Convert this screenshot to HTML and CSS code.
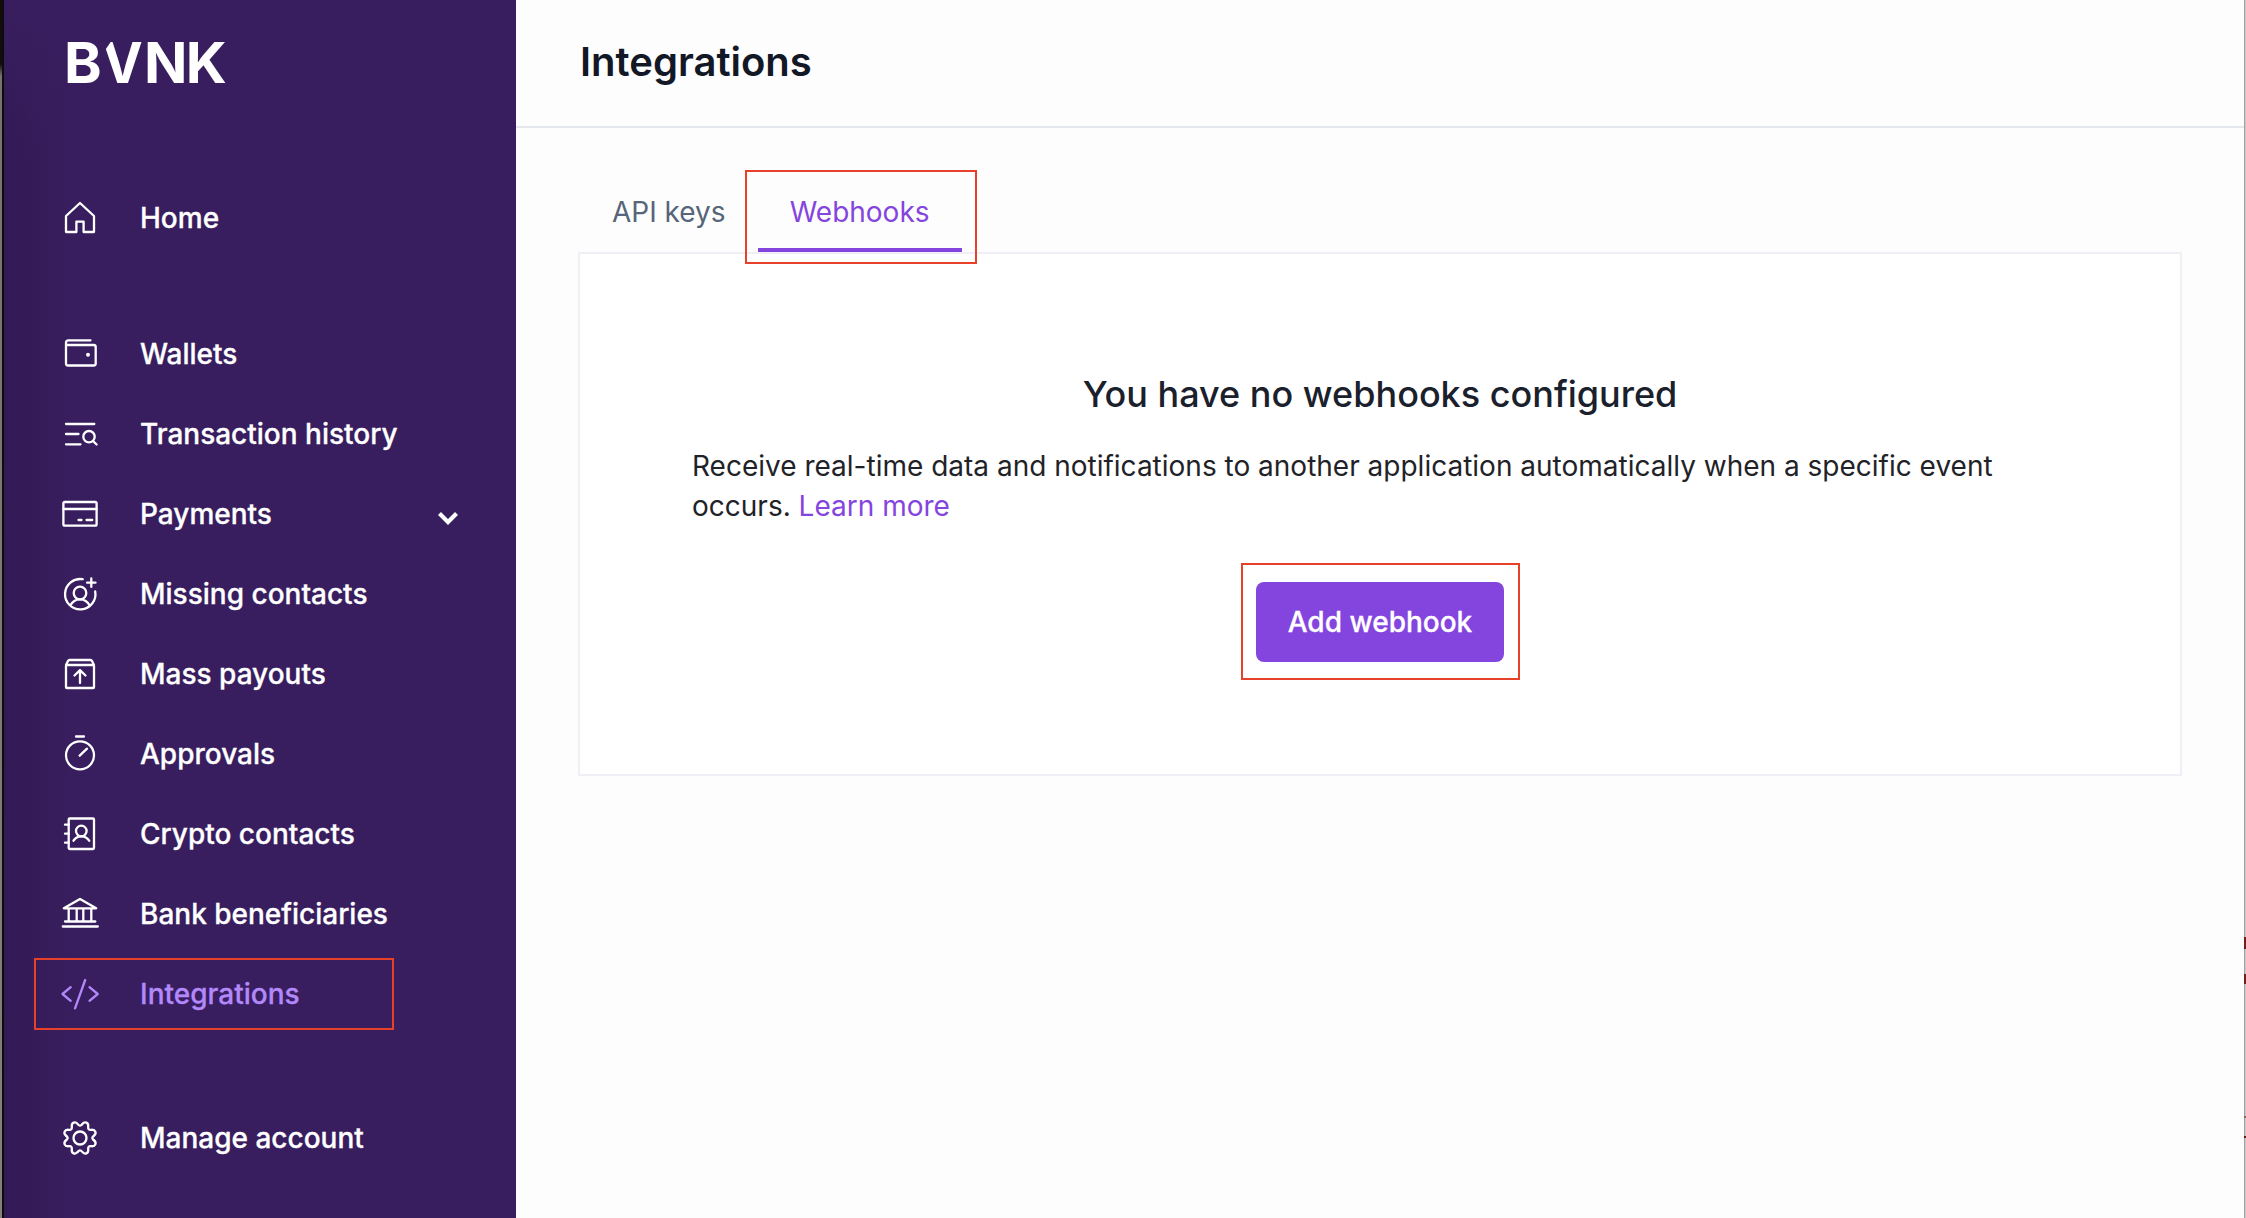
FILE: index.html
```html
<!DOCTYPE html>
<html lang="en">
<head>
<meta charset="utf-8">
<title>Integrations</title>
<link rel="stylesheet" href="styles.css">
</head>
<body>
<div class="app">
  <div class="edge edge-left"></div>
  <aside class="sidebar">
    <svg class="logo" viewBox="0 0 180 72" aria-label="BVNK">
      <defs><clipPath id="v-cut"><path d="M35 33 L51.500 9 H90 V72 H35 Z"/></clipPath></defs>
      <text x="0" y="56.500">B</text>
      <text x="38.300" y="56.500" textLength="40.500" lengthAdjust="spacingAndGlyphs" clip-path="url(#v-cut)">V</text>
      <text x="80" y="56.500">N</text>
      <text x="121.700" y="56.500">K</text>
    </svg>
    <nav class="nav">
      <a class="item home"><svg class="icon" viewBox="0 0 40 40"><path d="M6 18 20 5l14 13v16H23.600V23.700h-7.200V34H6z"/></svg><span>Home</span></a>
      <a class="item"><svg class="icon" viewBox="0 0 40 40"><path d="M30.500 6.300H8.500A2.500 2.500 0 0 0 6 8.800v20.700a2 2 0 0 0 2 2h25.700a2 2 0 0 0 2-2V13a2 2 0 0 0-2-2H6"/><circle class="dot" cx="28" cy="20.700" r="2"/></svg><span>Wallets</span></a>
      <a class="item"><svg class="icon" viewBox="0 0 40 40"><path d="M6 10h28.300M6 20h12.500M6 30.300h14.500M33 27l3.600 3.500"/><circle cx="29" cy="22.700" r="5.700"/></svg><span>Transaction history</span></a>
      <a class="item"><svg class="icon" viewBox="0 0 40 40"><rect x="3.400" y="8" width="33.200" height="23.700" rx="1.500"/><path d="M3.400 15h33.200M18.500 26h3M26.500 26h5.700"/></svg><span>Payments</span><svg class="chevron" viewBox="0 0 24 16"><path d="M3.500 3.500 12 12l8.500-8.500"/></svg></a>
      <a class="item"><svg class="icon" viewBox="0 0 40 40"><path d="M22.700 5.200A15.200 15.200 0 1 0 35.200 17.500M31.300 4.500v8.400M27.100 8.700h8.400M10.300 31.500c2-4 5.500-6.200 9.700-6.200s7.700 2.200 9.700 6.200"/><circle cx="20" cy="19" r="6.300"/></svg><span>Missing contacts</span></a>
      <a class="item"><svg class="icon" viewBox="0 0 40 40"><path d="M6 11h28v22.200a.8.800 0 0 1-.8.800H6.800a.8.800 0 0 1-.8-.8zl2-4q.500-1 1.500-1h21q1 0 1.500 1l2 4M20 29V16.500M14.500 21.500l5.500-5.300 5.500 5.300"/></svg><span>Mass payouts</span></a>
      <a class="item"><svg class="icon" viewBox="0 0 40 40"><circle cx="20" cy="21.300" r="14"/><path d="M16 2.500h8M19.700 21.700l7.300-7"/></svg><span>Approvals</span></a>
      <a class="item"><svg class="icon" viewBox="0 0 40 40"><rect x="8.700" y="4.500" width="25.300" height="30.500" rx="1"/><path d="M5 10.700h3.700M5 19.700h3.700M5 28.700h3.700M13.500 26.700c1.800-3 4.500-4.400 7.800-4.400s6 1.400 7.900 4.400"/><circle cx="21.300" cy="17" r="5.300"/></svg><span>Crypto contacts</span></a>
      <a class="item"><svg class="icon" viewBox="0 0 40 40"><path d="M3.800 14.300 20 5l16.200 9.300zM8.700 14.300v13.200M16.700 14.300v13.200M23.300 14.300v13.200M31.300 14.300v13.200M5 27.500h30.300M2.800 32.500h35"/></svg><span>Bank beneficiaries</span></a>
      <a class="item active"><svg class="icon" viewBox="0 0 40 40"><path d="M10.700 13.200 2.500 20l8.200 6.800M25.200 6 15 34.300M29.500 13.200l8.200 6.800-8.200 6.800"/></svg><span>Integrations</span><i class="mark mark-nav"></i></a>
      <a class="item account"><svg class="icon" viewBox="0 0 40 40"><defs><path id="cog" d="M22.030 6.350Q24.060 3.700 26.360 4.650T28.200 8.900Q27.780 12.220 31.100 11.800T35.350 13.650 33.650 17.970Q31 20 33.650 22.030"/></defs><use href="#cog"/><use href="#cog" transform="rotate(90 20 20)"/><use href="#cog" transform="rotate(180 20 20)"/><use href="#cog" transform="rotate(270 20 20)"/><circle cx="20" cy="20" r="6.500"/></svg><span>Manage account</span></a>
    </nav>
  </aside>
  <main class="main">
    <header class="header"><h1 class="title">Integrations</h1></header>
    <div class="content">
      <div class="tabs">
        <a class="tab">API keys</a>
        <a class="tab selected">Webhooks<i class="mark mark-tab"></i></a>
      </div>
      <section class="card">
        <h2 class="heading">You have no webhooks configured</h2>
        <p class="text">Receive real-time data and notifications to another application automatically when a specific event occurs. <a class="link">Learn more</a></p>
        <div class="action"><button class="button">Add webhook</button><i class="mark mark-button"></i></div>
      </section>
    </div>
  </main>
  <div class="edge edge-right"></div>
</div>
</body>
</html>
```
FILE: styles.css
```css
* { box-sizing: border-box; }
body { margin: 0; font-family: Inter, "Liberation Sans", sans-serif; background: #fdfdfd; color: #1a202c; }
.app { display: flex; width: 100%; height: 1218px; overflow: hidden; }
.edge { flex: none; }
.edge-left { width: 4px; background: linear-gradient(90deg, transparent 2px, #0d0a10 2px), linear-gradient(#140d08 0, #140d08 64px, #77736d 76px, #85807a 100%); }
.edge-right { width: 2px; background: linear-gradient(transparent 937px, #70201c 937px, #70201c 949px, transparent 949px, transparent 974px, #70201c 974px, #70201c 984px, transparent 984px, transparent 1116px, #8f6060 1116px, #8f6060 1118px, transparent 1118px, transparent 1136px, #6a1512 1136px, #6a1512 1138px, transparent 1138px), linear-gradient(90deg, #a1a1a1 1px, #c9c9c9 1px); }
.sidebar { flex: none; width: 512px; background: linear-gradient(#381e5e, rgba(56, 30, 94, 0) 160px), linear-gradient(90deg, #331a55 0, #381e5e 70px); }
.logo { display: block; width: 180px; height: 72px; margin: 26px 0 0 60px; font-size: 57px; font-weight: 700; fill: #fff; overflow: visible; }
.nav { display: flex; flex-direction: column; margin-top: 80px; }
.item { position: relative; display: flex; align-items: center; height: 80px; padding: 0 56px; color: #fff; font-size: 28px; font-weight: 500; -webkit-text-stroke: 0.3px; }
.item span { margin-left: 40px; }
.home { margin-bottom: 56px; }
.account { margin-top: 64px; }
.active { color: #b388fa; }
.icon { width: 40px; height: 40px; fill: none; stroke: currentColor; stroke-width: 2.3; stroke-linecap: round; stroke-linejoin: round; }
.dot { fill: currentColor; stroke: none; }
.chevron { width: 24px; height: 16px; margin: 8px 0 0 auto; fill: none; stroke: #fff; stroke-width: 4.2; }
.mark { position: absolute; border: 2px solid #e8412a; pointer-events: none; }
.mark-nav { left: 30px; top: 4px; width: 360px; height: 72px; }
.main { flex: 1; min-width: 0; }
.header { display: flex; align-items: center; height: 128px; padding: 0 64px 4px; border-bottom: 2px solid #e4e8ed; }
.title { margin: 0; font-size: 40px; font-weight: 600; color: #121826; }
.content { padding: 44px 62px 0; }
.tabs { display: flex; height: 80px; padding-left: 2px; }
.tab { position: relative; display: flex; align-items: center; padding: 0 32px; font-size: 28px; color: #56657a; }
.selected { color: #8445df; border-bottom: 4px solid #8445df; padding-top: 4px; }
.mark-tab { left: -13px; top: -2px; width: 232px; height: 94px; }
.card { display: flex; flex-direction: column; align-items: center; height: 524px; padding: 112px 112px 0; border: 2px solid #efeff5; background: #fff; }
.heading { margin: 0; font-size: 36px; line-height: 56px; font-weight: 500; color: #1a202c; }
.text { width: 100%; margin: 24px 0 0; font-size: 28px; line-height: 40px; color: #1f2328; }
.link { color: #8445df; }
.action { position: relative; margin-top: 56px; }
.button { display: block; width: 248px; height: 80px; padding: 0; border: 0; border-radius: 8px; background: #8445df; color: #fff; font: 500 28px Inter, sans-serif; -webkit-text-stroke: 0.3px; }
.mark-button { left: -15px; top: -19px; width: 279px; height: 117px; }
```
